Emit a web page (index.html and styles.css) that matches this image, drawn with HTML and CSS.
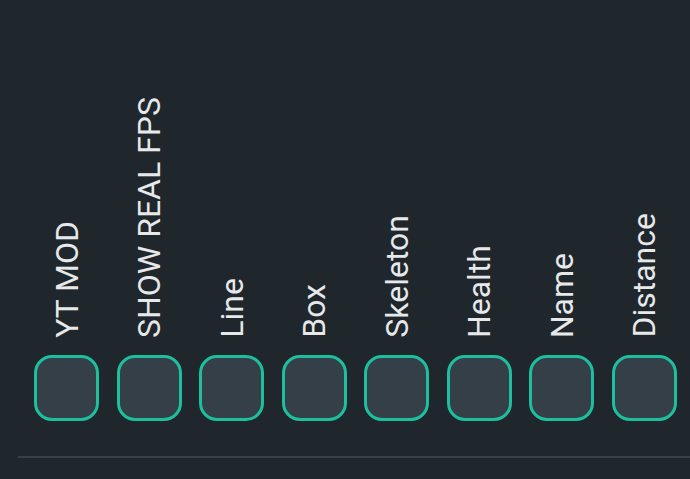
FILE: index.html
```html
<!DOCTYPE html>
<html>
<head>
<meta charset="utf-8">
<link rel="stylesheet" href="styles.css">
</head>
<body>
<div class="panel">
  <div class="row">
    <div class="item"><span class="label">YT MOD</span><div class="check"></div></div>
    <div class="item"><span class="label">SHOW REAL FPS</span><div class="check"></div></div>
    <div class="item"><span class="label">Line</span><div class="check"></div></div>
    <div class="item"><span class="label">Box</span><div class="check"></div></div>
    <div class="item"><span class="label">Skeleton</span><div class="check"></div></div>
    <div class="item"><span class="label">Health</span><div class="check"></div></div>
    <div class="item"><span class="label">Name</span><div class="check"></div></div>
    <div class="item"><span class="label">Distance</span><div class="check"></div></div>
  </div>
  <div class="divider"></div>
</div>
</body>
</html>
```
FILE: styles.css
```css
html, body {
  margin: 0;
  padding: 0;
  background: #1f262c;
}
.panel {
  width: 690px;
  height: 479px;
  overflow: hidden;
  font-family: Roboto, "Noto Sans", sans-serif;
}
.row {
  height: 421px;
  display: flex;
  align-items: flex-end;
  padding-left: 34px;
  gap: 17.5px;
}
.item {
  width: 65px;
  display: flex;
  flex-direction: column;
  align-items: center;
}
.label {
  writing-mode: vertical-rl;
  transform: rotate(180deg);
  font-size: 32px;
  line-height: 36px;
  color: #e6e8ea;
  white-space: nowrap;
  margin-bottom: 17px;
}
.check {
  box-sizing: border-box;
  width: 65px;
  height: 66px;
  border: 3px solid #1dbf9f;
  border-radius: 18px;
  background: #343f48;
}
.divider {
  margin-top: 35px;
  margin-left: 18px;
  height: 2px;
  background: #393f46;
}
```
